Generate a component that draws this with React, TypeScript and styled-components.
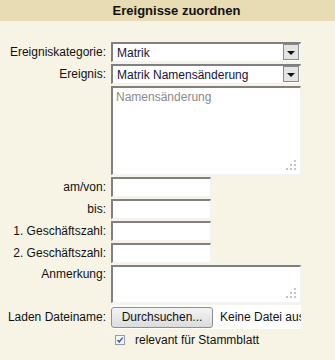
import React from "react";
import styled, { createGlobalStyle } from "styled-components";

const GlobalStyle = createGlobalStyle`
  html, body {
    margin: 0;
    padding: 0;
    background: #f7f4e6;
  }
  body {
    font-family: "Liberation Sans", Arial, sans-serif;
    font-size: 12px;
    color: #111;
  }
`;

const Panel = styled.div`
  width: 335px;
  height: 360px;
  overflow: hidden;
  background: #f7f4e6;
`;

const Header = styled.div`
  height: 21px;
  background: #e8dcb5;
  font-weight: bold;
  font-size: 13px;
  line-height: 21px;
  padding-left: 18px;
  text-align: center;
  color: #111;
`;

const Form = styled.div`
  display: grid;
  grid-template-columns: 111px 190px;
  row-gap: 2px;
  padding-top: 21px;
`;

const Label = styled.label<{ top?: boolean }>`
  text-align: right;
  padding-right: 5px;
  align-self: ${(p) => (p.top ? "start" : "center")};
  padding-top: ${(p) => (p.top ? "2px" : "0")};
  white-space: nowrap;
  line-height: 14px;
`;

const inset = `
  box-sizing: border-box;
  border-style: solid;
  border-width: 2px 1px 1px 2px;
  border-color: #808080 #f2f2f2 #f2f2f2 #808080;
  background: #fff;
`;

const Select = styled.div`
  ${inset}
  height: 20px;
  display: flex;
  align-items: center;
  padding-left: 4px;
  color: #15153a;
  position: relative;
`;

const Arrow = styled.span`
  position: absolute;
  right: 1px;
  top: 0;
  width: 16px;
  height: 16px;
  box-sizing: border-box;
  border: 1px solid #8a8a8a;
  background: #e4e4e4;
  display: flex;
  align-items: center;
  justify-content: center;
  &::after {
    content: "";
    border-left: 4px solid transparent;
    border-right: 4px solid transparent;
    border-top: 4px solid #111;
    margin-top: 1px;
  }
`;

const Area = styled.div<{ h: number }>`
  ${inset}
  height: ${(p) => p.h}px;
  padding: 2px 3px;
  color: #8a8a8a;
  position: relative;
  line-height: 14px;
`;

const Grip = styled.svg`
  position: absolute;
  right: 4px;
  bottom: 4px;
`;

const Input = styled.div`
  ${inset}
  width: 100px;
  height: 20px;
`;

const FileBox = styled.div`
  width: 190px;
  height: 24px;
  overflow: hidden;
  display: flex;
  align-items: center;
  gap: 7px;
  background: #fff;
  white-space: nowrap;
`;

const BrowseButton = styled.div`
  flex: none;
  box-sizing: border-box;
  width: 102px;
  height: 21px;
  border: 1px solid #8e8f8f;
  border-radius: 3px;
  background: linear-gradient(#f4f4f4, #dcdcdc);
  display: flex;
  align-items: center;
  justify-content: center;
  color: #111;
`;

const CheckRow = styled.div`
  grid-column: 2;
  display: flex;
  align-items: center;
  gap: 10px;
  padding-left: 4px;
  margin-top: 2px;
`;

const Check = styled.svg`
  flex: none;
`;

function ResizeGrip() {
  const dots = [
    [8, 0],
    [4, 4],
    [8, 4],
    [0, 8],
    [4, 8],
    [8, 8],
  ];
  return (
    <Grip width="10" height="10" viewBox="0 0 10 10">
      {dots.map(([x, y]) => (
        <rect key={`${x}-${y}`} x={x} y={y} width="2" height="2" fill="#c4c4c4" />
      ))}
    </Grip>
  );
}

export default function App() {
  return (
    <Panel>
      <GlobalStyle />
      <Header>Ereignisse zuordnen</Header>
      <Form>
        <Label>Ereigniskategorie:</Label>
        <Select>
          Matrik
          <Arrow />
        </Select>

        <Label>Ereignis:</Label>
        <Select>
          Matrik Namensänderung
          <Arrow />
        </Select>

        <span />
        <Area h={89}>
          Namensänderung
          <ResizeGrip />
        </Area>

        <Label>am/von:</Label>
        <Input />
        <Label>bis:</Label>
        <Input />
        <Label>1. Geschäftszahl:</Label>
        <Input />
        <Label>2. Geschäftszahl:</Label>
        <Input />

        <Label top>Anmerkung:</Label>
        <Area h={38}>
          <ResizeGrip />
        </Area>

        <Label>Laden Dateiname:</Label>
        <FileBox>
          <BrowseButton>Durchsuchen...</BrowseButton>
          Keine Datei ausgewählt.
        </FileBox>

        <CheckRow>
          <Check width="10" height="10" viewBox="0 0 10 10">
            <rect x="0.5" y="0.5" width="9" height="9" fill="#f4f6fa" stroke="#8f9bb3" />
            <path d="M2.5 5 L4.2 7 L7.6 2.6" fill="none" stroke="#3c5fb0" strokeWidth="1.5" />
          </Check>
          relevant für Stammblatt
        </CheckRow>
      </Form>
    </Panel>
  );
}
